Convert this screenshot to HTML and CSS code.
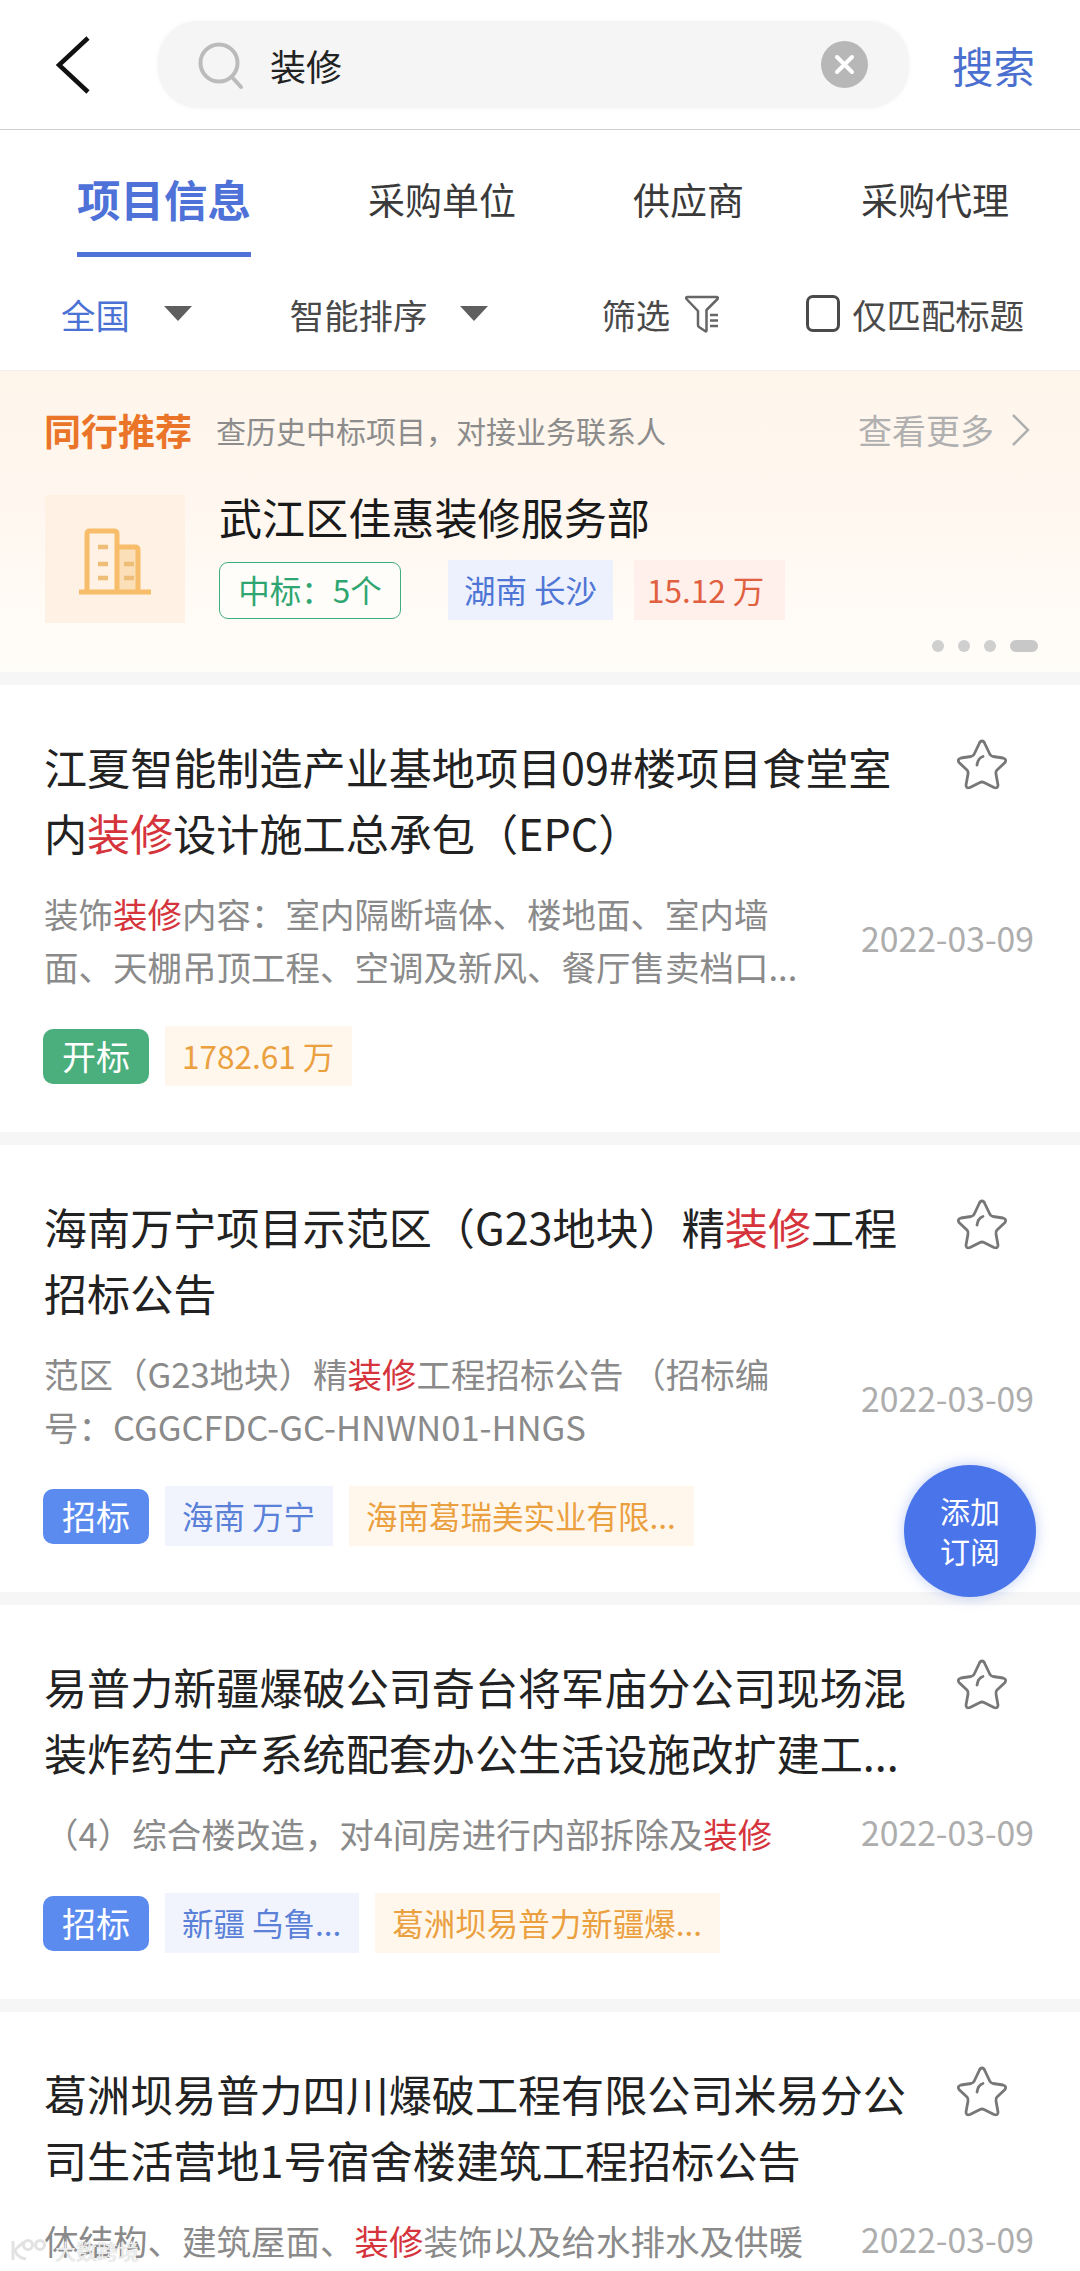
FILE: index.html
```html
<!DOCTYPE html>
<html lang="zh-CN">
<head>
<meta charset="utf-8">
<title>搜索 装修</title>
<link rel="stylesheet" href="styles.css">
</head>
<body>
<div class="page">
  <header class="topbar">
    <svg class="back" viewBox="0 0 34 58"><path d="M32 2 L3 29 L32 56" /></svg>
    <div class="search">
      <svg class="search-icon" viewBox="0 0 46 48"><circle cx="21" cy="21" r="18.5"/><path class="search-handle" d="M34 35 L43 45"/></svg>
      <span class="search-text">装修</span>
      <svg class="clear" viewBox="0 0 47 47"><circle cx="23.5" cy="23.5" r="23.5"/><path d="M16 16 L31 31 M31 16 L16 31"/></svg>
    </div>
    <span class="search-btn">搜索</span>
  </header>

  <nav class="tabs">
    <span class="tab tab-active">项目信息</span>
    <span class="tab">采购单位</span>
    <span class="tab">供应商</span>
    <span class="tab">采购代理</span>
  </nav>

  <div class="filters">
    <div class="filter f-area"><span class="f-blue">全国</span><i class="tri tri-a"></i></div>
    <div class="filter f-sort"><span>智能排序</span><i class="tri tri-b"></i></div>
    <div class="filter f-screen"><span>筛选</span>
      <svg class="funnel" viewBox="0 0 34 38"><path d="M2.5 2 H31.5 Q33.5 2 32.5 4 L21.5 15 V35.5 Q21.5 37 20 36 L14 32 Q13 31.5 13 30 V16 L1.5 4 Q0.5 2 2.5 2 Z"/><path d="M25 20 H33 M25 25.5 H33 M25 31 H33"/></svg>
    </div>
    <label class="filter f-check"><span class="box"></span><span>仅匹配标题</span></label>
  </div>

  <section class="banner">
    <div class="banner-head">
      <strong class="banner-title">同行推荐</strong>
      <span class="banner-sub">查历史中标项目，对接业务联系人</span>
      <span class="banner-more">查看更多</span>
      <svg class="more-arrow" viewBox="0 0 19 34"><path d="M2 2 L17 17 L2 32"/></svg>
    </div>
    <div class="banner-body">
      <div class="company-icon">
        <svg viewBox="0 0 76 68"><path class="b-fill" d="M40 20 H60 V62 H40 Z"/><path class="b-line" d="M10 63 V6 Q10 3 13 3 H37 Q40 3 40 6 V63 M40 19 H58 Q61 19 61 22 V63 M2 64 H74"/><path class="b-line b-dash" d="M21 19 H31 M21 36 H31 M21 50 H31 M47 36 H57 M47 50 H57"/></svg>
      </div>
      <div class="company">
        <div class="company-name">武江区佳惠装修服务部</div>
        <div class="company-tags">
          <span class="ctag ctag-green">中标：5个</span>
          <span class="ctag ctag-blue">湖南 长沙</span>
          <span class="ctag ctag-red">15.12 万</span>
        </div>
      </div>
    </div>
    <div class="dots"><i></i><i></i><i></i><i class="dot-on"></i></div>
  </section>

  <article class="card">
    <div class="card-top">
      <h2 class="title">江夏智能制造产业基地项目09#楼项目食堂室<br>内<em>装修</em>设计施工总承包（EPC）</h2>
      <svg class="star" viewBox="0 0 52 52"><use href="#star-shape"/></svg>
    </div>
    <div class="card-mid">
      <p class="desc">装饰<em>装修</em>内容：室内隔断墙体、楼地面、室内墙<br>面、天棚吊顶工程、空调及新风、餐厅售卖档口...</p>
      <time class="date">2022-03-09</time>
    </div>
    <div class="card-tags">
      <span class="status status-green">开标</span>
      <span class="tag tag-orange">1782.61 万</span>
    </div>
  </article>

  <article class="card">
    <div class="card-top">
      <h2 class="title">海南万宁项目示范区（G23地块）精<em>装修</em>工程<br>招标公告</h2>
      <svg class="star" viewBox="0 0 52 52"><use href="#star-shape"/></svg>
    </div>
    <div class="card-mid">
      <p class="desc">范区（G23地块）精<em>装修</em>工程招标公告 （招标编<br>号：CGGCFDC-GC-HNWN01-HNGS</p>
      <time class="date">2022-03-09</time>
    </div>
    <div class="card-tags">
      <span class="status status-blue">招标</span>
      <span class="tag tag-blue">海南 万宁</span>
      <span class="tag tag-orange">海南葛瑞美实业有限...</span>
    </div>
  </article>

  <article class="card">
    <div class="card-top">
      <h2 class="title">易普力新疆爆破公司奇台将军庙分公司现场混<br>装炸药生产系统配套办公生活设施改扩建工...</h2>
      <svg class="star" viewBox="0 0 52 52"><use href="#star-shape"/></svg>
    </div>
    <div class="card-mid">
      <p class="desc">（4）综合楼改造，对4间房进行内部拆除及<em>装修</em></p>
      <time class="date">2022-03-09</time>
    </div>
    <div class="card-tags">
      <span class="status status-blue">招标</span>
      <span class="tag tag-blue">新疆 乌鲁...</span>
      <span class="tag tag-orange">葛洲坝易普力新疆爆...</span>
    </div>
  </article>

  <article class="card">
    <div class="card-top">
      <h2 class="title">葛洲坝易普力四川爆破工程有限公司米易分公<br>司生活营地1号宿舍楼建筑工程招标公告</h2>
      <svg class="star" viewBox="0 0 52 52"><use href="#star-shape"/></svg>
    </div>
    <div class="card-mid">
      <p class="desc">体结构、建筑屋面、<em>装修</em>装饰以及给水排水及供暖</p>
      <time class="date">2022-03-09</time>
    </div>
  </article>

  <button class="fab">添加<br>订阅</button>
  <div class="watermark">
    <svg class="wm-logo" viewBox="0 0 38 24"><path d="M3 3 V22"/><path d="M14 4 Q5 11 5 13 Q8 20 16 21"/><circle cx="18" cy="7" r="4.5"/><circle cx="30" cy="7" r="4.5"/></svg>
    <span>大数跨境</span>
  </div>

  <svg class="defs" width="0" height="0"><defs>
    <g id="star-shape" class="star-g">
      <path d="M26 3 Q28 3 29 6 L34 16.5 Q35 18 37 18.5 L47 20 Q51 21 49 24.5 L41 32 Q39.5 33.5 40 36 L42 47 Q42 51 38 49.5 L28 44.5 Q26 43.5 24 44.5 L14 49.5 Q10 51 10 47 L12 36 Q12.5 33.5 11 32 L3 24.5 Q1 21 5 20 L15 18.5 Q17 18 18 16.5 L23 6 Q24 3 26 3 Z"/>
      <path d="M21 27 Q22 20 27 18.5"/>
    </g>
  </defs></svg>
</div>
</body>
</html>
```
FILE: styles.css
```css
* { box-sizing: border-box; }
html, body { margin: 0; padding: 0; background: #fff; }
body { font-family: "Noto Sans CJK SC", "Noto Sans", sans-serif; color: #333; }
.page { position: relative; width: 1080px; height: 2271px; overflow: hidden; background: #fff; }
em { font-style: normal; color: #d5343c; }
i { display: block; font-style: normal; }

/* top bar */
.topbar { display: flex; align-items: center; height: 130px; padding-left: 56px; border-bottom: 1px solid #cfcfcf; }
.back { width: 34px; height: 58px; flex: none; }
.back path { fill: none; stroke: #111; stroke-width: 4.5; }
.search { display: flex; align-items: center; width: 751px; height: 87px; margin-left: 68px; padding: 0 41px 0 40px; border-radius: 40px; background: #f5f5f5; box-shadow: 0 0 5px #f5f5f5; }
.search-icon { width: 46px; height: 48px; margin-top: 2px; flex: none; }
.search-icon circle, .search-icon path { fill: none; stroke: #bbb; stroke-width: 4; }
.search-handle { stroke-linecap: round; }
.search-text { margin-left: 26px; font-size: 36px; line-height: 50px; color: #222; }
.clear { width: 47px; height: 47px; margin-left: auto; flex: none; }
.clear circle { fill: #b7b7b7; }
.clear path { stroke: #fff; stroke-width: 4; fill: none; stroke-linecap: round; }
.search-btn { margin-left: 43px; font-size: 41.5px; line-height: 50px; color: #4a6fce; }

/* tabs */
.tabs { display: flex; justify-content: space-between; height: 127px; padding: 0 71px 0 77px; }
.tab { height: 127px; padding-top: 44px; border-bottom: 5px solid transparent; font-size: 37px; line-height: 50px; color: #3a3a3a; }
.tab-active { font-size: 43.5px; font-weight: 700; color: #4e72d8; border-bottom-color: #4e72d8; }

/* filters */
.filters { display: flex; align-items: center; height: 114px; padding-left: 61px; border-bottom: 1px solid #eee; font-size: 34.4px; line-height: 44px; color: #4a4a4a; }
.filter { display: flex; align-items: center; }
.f-blue { color: #4a72d4; }
.tri { width: 0; height: 0; border-left: 14px solid transparent; border-right: 14px solid transparent; border-top: 15px solid #5f5f5f; }
.tri-a { margin-left: 34px; }
.tri-b { margin-left: 33px; }
.f-sort { margin-left: 98px; }
.f-screen { margin-left: 113px; }
.funnel { width: 34px; height: 38px; margin-left: 15px; }
.funnel path { fill: none; stroke: #666; stroke-width: 2.5; stroke-linejoin: round; }
.f-check { margin-left: 87px; }
.box { width: 34px; height: 37px; margin-right: 12px; border: 3px solid #4a4a4a; border-radius: 7px; }

/* banner */
.banner { height: 301px; padding-top: 34px; background: linear-gradient(#fef5eb, #fff7ef 45%, #fffdf9); }
.banner-head { display: flex; align-items: center; height: 50px; padding: 0 50px 0 44px; }
.banner-title { font-size: 37px; font-weight: 700; line-height: 50px; color: #ea7529; }
.banner-sub { margin-left: 24px; font-size: 30px; line-height: 50px; color: #8c8c8c; }
.banner-more { margin-left: auto; font-size: 34px; line-height: 50px; color: #b0b0b0; }
.more-arrow { width: 19px; height: 34px; margin-left: 17px; }
.more-arrow path { fill: none; stroke: #b0b0b0; stroke-width: 2.5; }
.banner-body { display: flex; margin-top: 40px; padding-left: 45px; }
.company-icon { display: flex; align-items: center; justify-content: center; width: 140px; height: 128px; background: #fff1e3; flex: none; }
.company-icon svg { width: 76px; height: 68px; margin-top: 5px; }
.b-fill { fill: #fbdfb8; }
.b-line { fill: none; stroke: #f7bd6a; stroke-width: 5; }
.b-dash { stroke: #eebd78; stroke-width: 4.5; }
.company { margin-left: 34px; }
.company-name { margin-top: -1px; font-size: 43.1px; line-height: 44px; color: #1a1a1a; }
.company-tags { display: flex; align-items: center; height: 60px; margin-top: 22px; font-size: 31.5px; }
.ctag { display: flex; align-items: center; height: 60px; padding-bottom: 2px; }
.ctag-green { width: 182px; height: 57px; justify-content: center; border: 1.5px solid #3fae7e; border-radius: 9px; color: #2fa672; background: #fffdf9; }
.ctag-blue { width: 165px; margin-left: 47px; justify-content: center; background: #edf1fd; color: #4f76d5; }
.ctag-red { width: 151px; margin-left: 21px; padding-left: 13px; background: #fff0ec; color: #e0603f; }
.dots { display: flex; justify-content: flex-end; align-items: center; gap: 14px; height: 12px; margin-top: 17px; padding-right: 42px; }
.dots i { width: 12px; height: 12px; border-radius: 50%; background: #cfcfcf; }
.dots .dot-on { width: 28px; border-radius: 6px; background: #c8c8c8; }

/* cards */
.card { padding: 48px 46px 46px 44px; border-top: 13px solid #f6f6f6; }
.card-top { display: flex; justify-content: space-between; }
.title { margin: 0; font-size: 43.1px; font-weight: 400; line-height: 66px; color: #222; }
.star { width: 52px; height: 52px; margin: 5px 26px 0 0; flex: none; overflow: visible; }
.star-g path { fill: none; stroke: #777; stroke-width: 2.8; stroke-linejoin: round; stroke-linecap: round; }
.card-mid { display: flex; align-items: center; justify-content: space-between; margin-top: 22px; }
.desc { margin: 0; font-size: 34.5px; line-height: 53px; color: #8a8a8a; }
.date { margin-bottom: 4px; font-size: 33.7px; line-height: 44px; color: #adadad; }
.card-tags { display: flex; align-items: center; gap: 16px; height: 60px; margin: 33px 0 0 -1px; }
.status { display: flex; align-items: center; justify-content: center; width: 106px; height: 55px; padding-bottom: 2px; border-radius: 10px; font-size: 34px; color: #fff; }
.status-green { background: #4bae7d; }
.status-blue { background: #5b8bef; }
.tag { display: flex; align-items: center; height: 60px; padding: 0 18px 3px 17px; font-size: 31.5px; }
.tag-orange { background: #fff7ec; color: #eba03f; }
.tag-blue { background: #f1f4fd; color: #5a80d8; }

/* floating */
.fab { position: absolute; left: 904px; top: 1465px; width: 132px; height: 132px; padding: 0 0 2px; border: 0; border-radius: 50%; background: #4a74ea; box-shadow: 0 0 14px rgba(74, 116, 234, .35); font: inherit; font-size: 30px; line-height: 40px; color: #fff; }
.watermark { position: absolute; left: 10px; top: 2238px; display: flex; align-items: flex-end; gap: 7px; height: 24px; font-size: 21px; line-height: 24px; color: rgba(255, 255, 255, .8); text-shadow: 0 0 1px #aaa; }
.wm-logo { width: 38px; height: 24px; }
.wm-logo path, .wm-logo circle { fill: none; stroke: #e2e2e2; stroke-width: 3; }
.defs { position: absolute; }
```
